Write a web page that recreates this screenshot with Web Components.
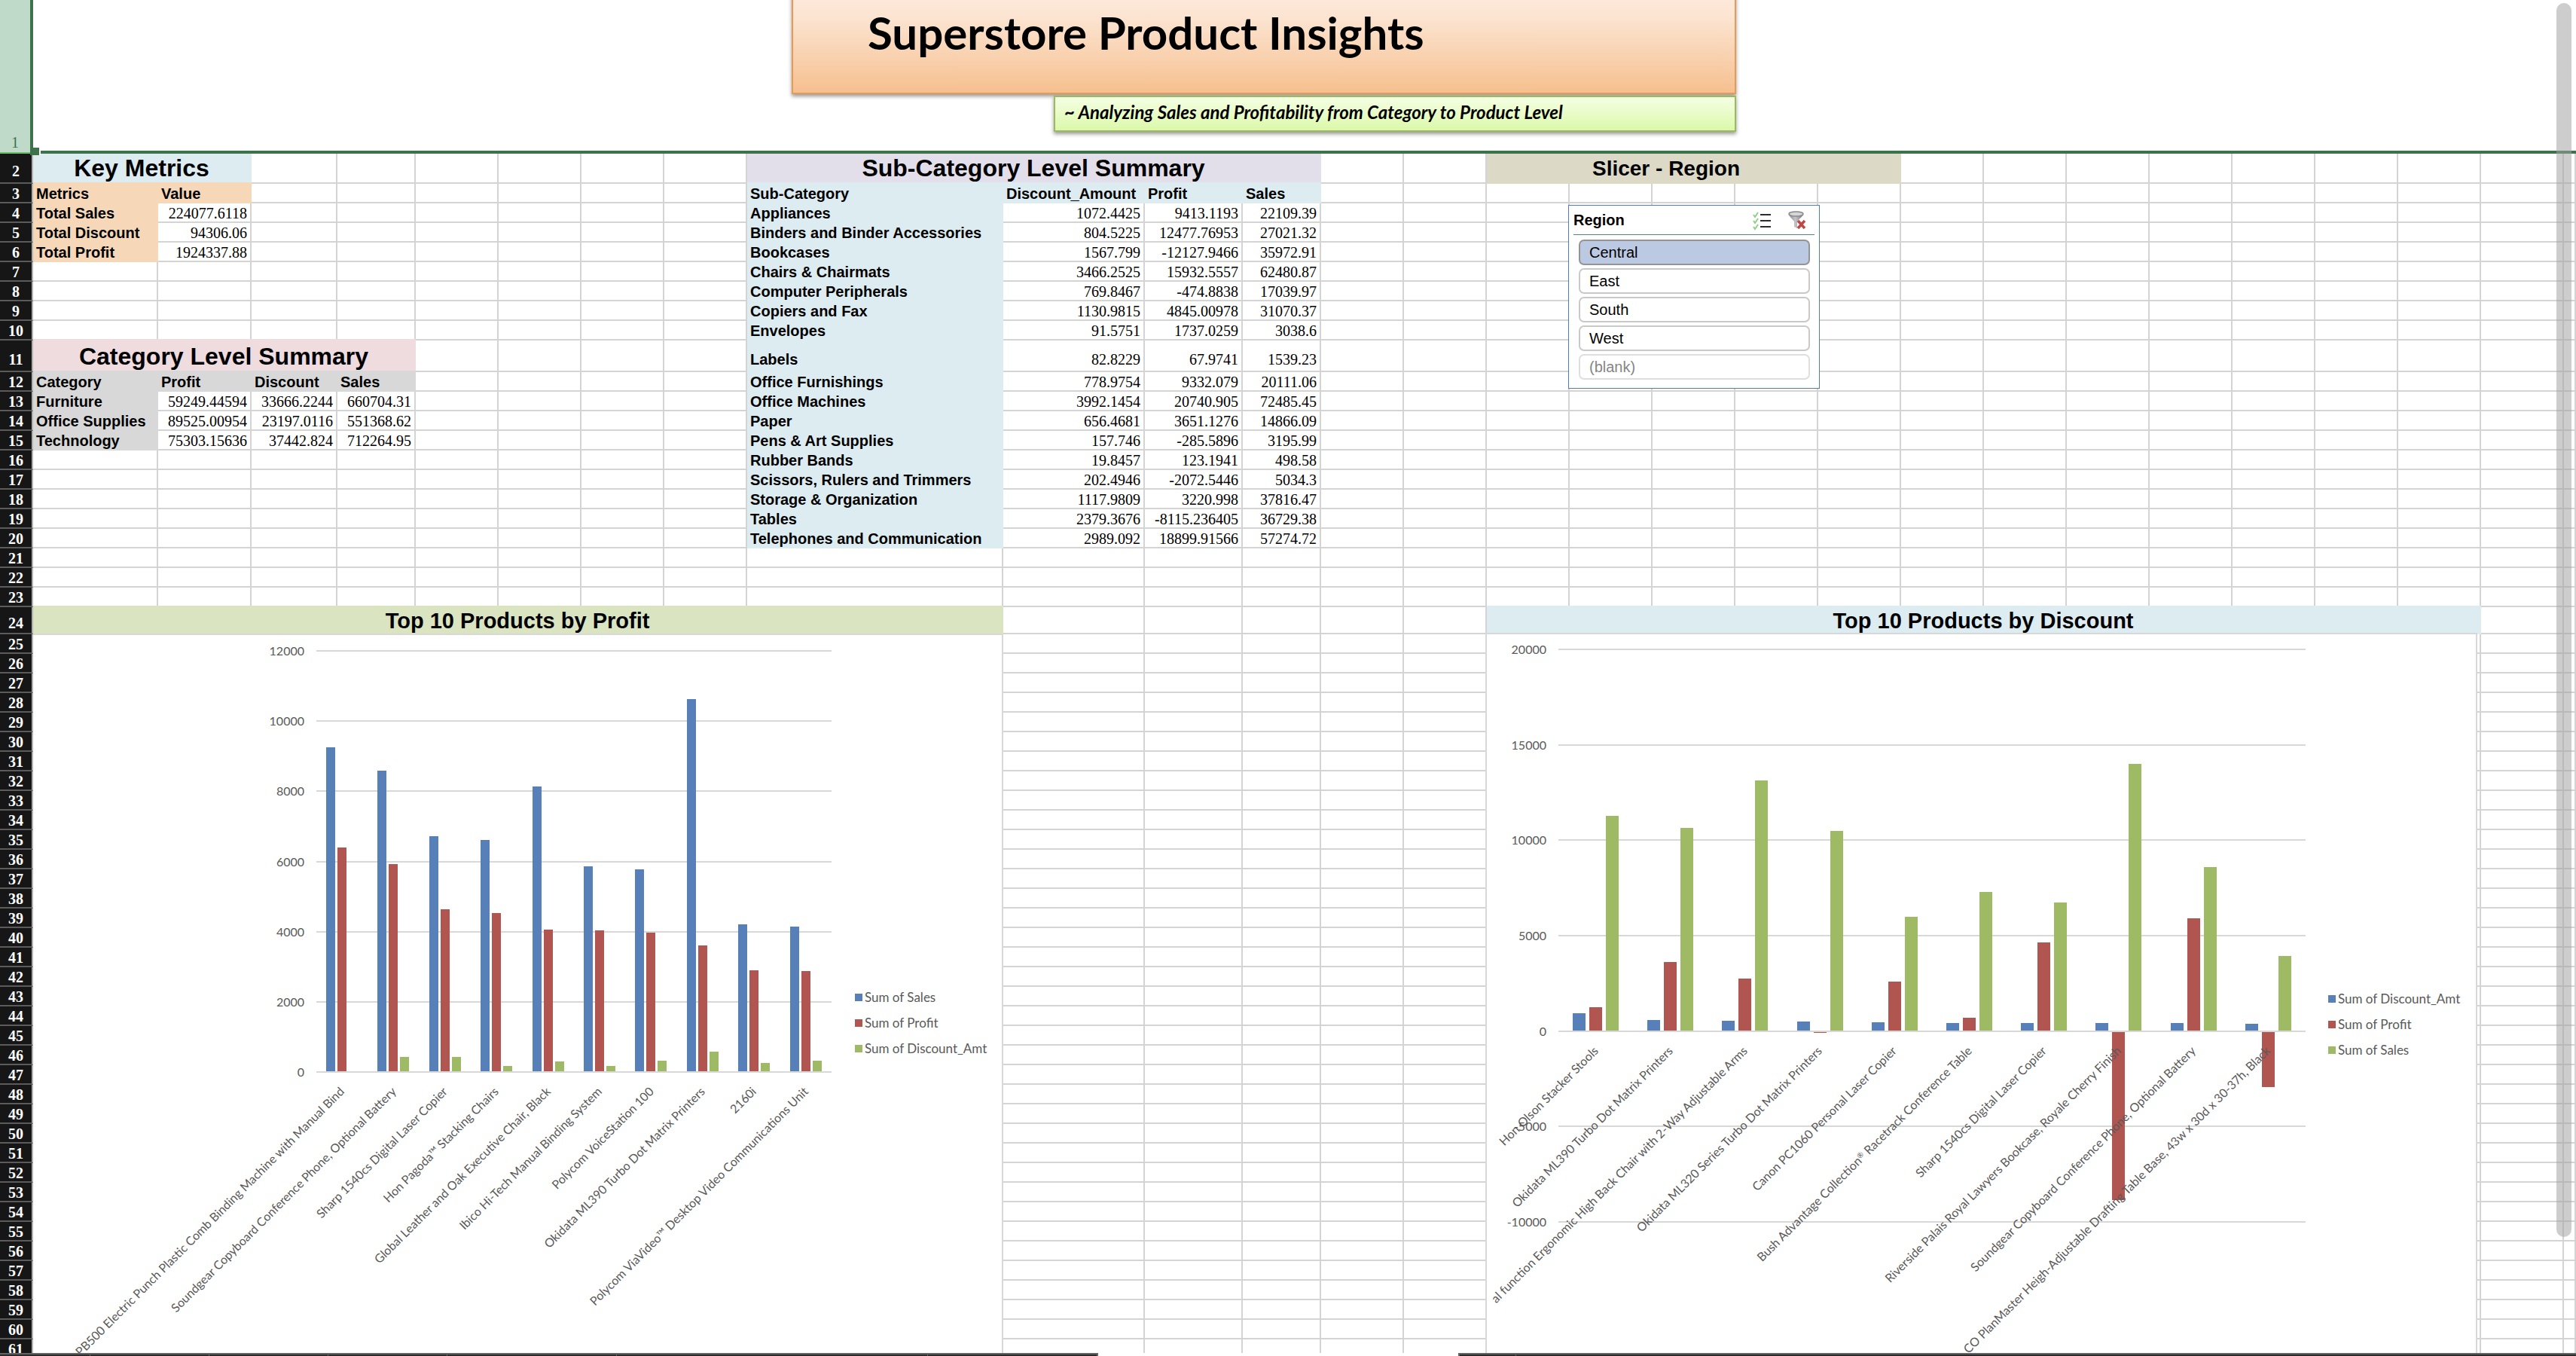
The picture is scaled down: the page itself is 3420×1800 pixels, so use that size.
<!DOCTYPE html>
<html lang="en">
<head>
<meta charset="utf-8">
<title>Superstore Product Insights</title>
<style>
  html, body { margin: 0; height: 100%; overflow: hidden; background: #fff; }
  body { display: flex; flex-direction: column; font-family: "Liberation Sans", sans-serif; font-size: 20px; color: #000; }
  work-sheet { flex: 1; min-height: 0; }
  .title { left: 1051px; top: -40px; width: 1254px; height: 165px; }
  .subtitle { left: 1399px; top: 127px; width: 906px; height: 48px; }
  .region { left: 2082px; top: 272px; width: 334px; height: 244px; }
  .profit { left: 44px; top: 841px; width: 1288px; bottom: 0; }
  .discount { left: 1972px; top: 840px; width: 1317px; bottom: 0; }
</style>
</head>
<body>
<work-sheet>
  <text-banner class="title" kind="heading"><h1>Superstore Product Insights</h1></text-banner>
  <text-banner class="subtitle" kind="note"><p>~ Analyzing Sales and Profitability from Category to Product Level</p></text-banner>
  <region-slicer class="region" heading="Region" selected="Central"></region-slicer>
  <bar-chart class="profit" source="profit"></bar-chart>
  <bar-chart class="discount" source="discount"></bar-chart>
</work-sheet>
<tab-strip></tab-strip>

<script>
const COLUMN_WIDTHS = [166, 124, 114, 104, 110, 110, 110, 110, 340, 188, 130, 104, 110, 110,
  110, 110, 110, 110, 110, 110, 110, 110, 110, 110, 110, 110, 110];
const COLUMN_COUNT = COLUMN_WIDTHS.length + 1;
const LAST_ROW = 61;

/* row -> column -> [text, classes, colspan] */
const CELLS = {};
const put = (row, col, text, cls = '', span = 1) => { (CELLS[row] = CELLS[row] || {})[col] = [text, cls, span]; };

put(2, 0, 'Key Metrics', 'head big blue', 2);
put(3, 0, 'Metrics', 'label orange'); put(3, 1, 'Value', 'label orange');
[['Total Sales', '224077.6118'], ['Total Discount', '94306.06'], ['Total Profit', '1924337.88']].forEach(([a, b], i) => {
  put(4 + i, 0, a, 'label orange'); put(4 + i, 1, b, 'num');
});

put(11, 0, 'Category Level Summary', 'head big pink', 4);
['Category', 'Profit', 'Discount', 'Sales'].forEach((t, i) => put(12, i, t, 'label grey'));
[['Furniture', '59249.44594', '33666.2244', '660704.31'],
 ['Office Supplies', '89525.00954', '23197.0116', '551368.62'],
 ['Technology', '75303.15636', '37442.824', '712264.95']].forEach((r, i) =>
  r.forEach((t, c) => put(13 + i, c, t, c ? 'num' : 'label grey')));

put(2, 8, 'Sub-Category Level Summary', 'head big purple', 4);
['Sub-Category', 'Discount_Amount', 'Profit', 'Sales'].forEach((t, i) => put(3, 8 + i, t, 'label blue'));
[['Appliances', '1072.4425', '9413.1193', '22109.39'],
 ['Binders and Binder Accessories', '804.5225', '12477.76953', '27021.32'],
 ['Bookcases', '1567.799', '-12127.9466', '35972.91'],
 ['Chairs & Chairmats', '3466.2525', '15932.5557', '62480.87'],
 ['Computer Peripherals', '769.8467', '-474.8838', '17039.97'],
 ['Copiers and Fax', '1130.9815', '4845.00978', '31070.37'],
 ['Envelopes', '91.5751', '1737.0259', '3038.6'],
 ['Labels', '82.8229', '67.9741', '1539.23'],
 ['Office Furnishings', '778.9754', '9332.079', '20111.06'],
 ['Office Machines', '3992.1454', '20740.905', '72485.45'],
 ['Paper', '656.4681', '3651.1276', '14866.09'],
 ['Pens & Art Supplies', '157.746', '-285.5896', '3195.99'],
 ['Rubber Bands', '19.8457', '123.1941', '498.58'],
 ['Scissors, Rulers and Trimmers', '202.4946', '-2072.5446', '5034.3'],
 ['Storage & Organization', '1117.9809', '3220.998', '37816.47'],
 ['Tables', '2379.3676', '-8115.236405', '36729.38'],
 ['Telephones and Communication', '2989.092', '18899.91566', '57274.72']].forEach((r, i) =>
  r.forEach((t, c) => put(4 + i, 8 + c, t, c ? 'num' : 'label blue')));

put(2, 14, 'Slicer - Region', 'head mid khaki early', 5);
put(24, 0, 'Top 10 Products by Profit', 'head mid green', 9);
put(24, 14, 'Top 10 Products by Discount', 'head mid blue', 12);

const BLUE = '#5880b8', RED = '#b15550', GREEN = '#9fba64';
const CHARTS = {
  profit: {
    label: 'Top 10 Products by Profit',
    plot: { left: 376, top: 21, width: 684, height: 559 },
    min: 0, max: 12000, step: 2000,
    bars: { first: 13, pitch: 15, width: 12 },
    legend: { left: 1091, top: 481 },
    series: [
      ['Sum of Sales', BLUE, [9248, 8577, 6719, 6608, 8130, 5853, 5769, 10617, 4205, 4135]],
      ['Sum of Profit', RED, [6398, 5923, 4638, 4540, 4051, 4037, 3981, 3604, 2892, 2878]],
      ['Sum of Discount_Amt', GREEN, [0, 419, 419, 182, 293, 182, 321, 573, 251, 321]]],
    categories: ['PB500 Electric Punch Plastic Comb Binding Machine with Manual Bind',
      'Soundgear Copyboard Conference Phone, Optional Battery', 'Sharp 1540cs Digital Laser Copier',
      'Hon Pagoda™ Stacking Chairs', 'Global Leather and Oak Executive Chair, Black',
      'Ibico Hi-Tech Manual Binding System', 'Polycom VoiceStation 100',
      'Okidata ML390 Turbo Dot Matrix Printers', '2160i', 'Polycom ViaVideo™ Desktop Video Communications Unit']
  },
  discount: {
    label: 'Top 10 Products by Discount',
    plot: { left: 95, top: 20, width: 992, height: 760 },
    min: -10000, max: 20000, step: 5000,
    bars: { first: 19, pitch: 22, width: 17 },
    legend: { left: 1117, top: 484 },
    series: [
      ['Sum of Discount_Amt', BLUE, [924, 590, 539, 513, 462, 411, 411, 411, 411, 385]],
      ['Sum of Profit', RED, [1258, 3619, 2746, -90, 2592, 693, 4646, -8850, 5904, -2920]],
      ['Sum of Sales', GREEN, [11268, 10652, 13116, 10472, 5980, 7290, 6725, 13989, 8599, 3927]]],
    categories: ['Hon Olson Stacker Stools', 'Okidata ML390 Turbo Dot Matrix Printers',
      'al function Ergonomic High Back Chair with 2-Way Adjustable Arms',
      'Okidata ML320 Series Turbo Dot Matrix Printers', 'Canon PC1060 Personal Laser Copier',
      'Bush Advantage Collection® Racetrack Conference Table', 'Sharp 1540cs Digital Laser Copier',
      'Riverside Palais Royal Lawyers Bookcase, Royale Cherry Finish',
      'Soundgear Copyboard Conference Phone, Optional Battery',
      'CO PlanMaster Heigh-Adjustable Drafting Table Base, 43w x 30d x 30-37h, Black']
  }
};

const escapeText = s => s.replace(/&/g, '&amp;').replace(/</g, '&lt;');

customElements.define('work-sheet', class extends HTMLElement {
  constructor() {
    super();
    const cols = '<col style="width:44px">' + COLUMN_WIDTHS.map(w => `<col style="width:${w}px">`).join('') + '<col>';
    let rows = '';
    for (let r = 1; r <= LAST_ROW; r++) {
      let cells = '';
      if (r === 1) cells = `<td colspan="${COLUMN_COUNT}"></td>`;
      else for (let c = 0; c < COLUMN_COUNT;) {
        const cell = CELLS[r] && CELLS[r][c];
        if (cell) {
          cells += `<td class="${cell[1]}" colspan="${cell[2]}">${escapeText(cell[0])}</td>`;
          c += cell[2];
        } else { cells += '<td></td>'; c++; }
      }
      rows += `<tr class="r${r}"><th scope="row">${r}</th>${cells}</tr>`;
    }
    this.attachShadow({ mode: 'open' }).innerHTML = `
      <style>
        :host { display: block; position: relative; overflow: hidden; }
        table { width: 100%; table-layout: fixed; border-collapse: separate; border-spacing: 0; }
        tr { height: 26px; }
        td, th { box-sizing: border-box; height: 26px; padding: 0 4px; border: 0 solid #d4d4d4; border-width: 0 2px 2px 0;
          line-height: 22px; white-space: nowrap; vertical-align: bottom; }
        th { padding: 0; background: #161616; color: #fff; text-align: center; font: 700 20px/22px "Liberation Serif", serif;
          border-color: #b0b0b0; border-bottom-color: #5a5a5a; }
        .r1 td, .r1 th { height: 204px; }
        .r1 td { border-bottom: 4px solid #3d734b; border-right: 0; }
        .r1 th { background: #bfdac9; color: #3d734b; font-weight: 400; border-right: 4px solid #3d734b; border-bottom: 2px solid #6fbf6a; padding-bottom: 2px; }
        .r2 td, .r2 th { height: 40px; padding-bottom: 4px; }
        .r11 td, .r11 th { height: 42px; padding-bottom: 4px; }
        .r24 td, .r24 th { height: 36px; padding-bottom: 2px; }
        .num { text-align: right; font-family: "Liberation Serif", serif; }
        .label, .head { font-weight: 700; background: var(--fill); border-color: var(--fill); box-shadow: 0 -2px 0 var(--fill); }
        .r2 .head { box-shadow: none; }
        .head { text-align: center; }
        tr .big { font-size: 32px; line-height: 36px; padding-bottom: 1px; }
        tr .mid { font-size: 28px; line-height: 32px; padding-bottom: 0; }
        .r24 .mid { font-size: 29px; }
        .r2 .mid { padding-bottom: 2px; }
        tr .early { padding-right: 76px; }
        .blue { --fill: #ddecf1; } .orange { --fill: #f6d7b8; } .pink { --fill: #efdcde; } .grey { --fill: #d8d8d8; }
        .purple { --fill: #e2dfea; } .khaki { --fill: #dcd9c6; } .green { --fill: #dae4c1; }
        .handle { position: absolute; left: 40px; top: 196px; width: 12px; height: 10px; background: #3d734b; border-right: 2px solid #fff; }
        .scroll { position: absolute; right: 6px; top: 4px; width: 20px; height: 1638px; border-radius: 10px; background: rgba(160, 160, 160, .53); }
        ::slotted(*) { position: absolute; box-sizing: border-box; }
      </style>
      <table><colgroup>${cols}</colgroup><tbody>${rows}</tbody></table>
      <div class="handle"></div>
      <slot></slot>
      <div class="scroll"></div>`;
  }
});

customElements.define('text-banner', class extends HTMLElement {
  constructor() {
    super();
    this.attachShadow({ mode: 'open' }).innerHTML = `
      <style>
        :host { display: flex; border: 2px solid; font-family: Lato, sans-serif; font-weight: 700; white-space: nowrap; box-shadow: 0 3px 5px rgba(0, 0, 0, .4); }
        :host([kind="heading"]) { align-items: flex-end; padding: 0 0 48px 99px; border-color: #e79a56; background: linear-gradient(#fde9dc 20%, #fbe3cf 40%, #f6c08f); }
        :host([kind="note"]) { align-items: center; padding: 0 12px 4px; border-color: #9bba60; background: linear-gradient(#f5ffe4, #dcf8aa); }
        ::slotted(*) { margin: 0; font-weight: 700; }
        ::slotted(h1) { font-size: 60px; line-height: 64px; }
        ::slotted(p) { font-size: 24px; line-height: 28px; font-style: italic; }
      </style><slot></slot>`;
  }
});

customElements.define('region-slicer', class extends HTMLElement {
  connectedCallback() {
    const items = ['Central', 'East', 'South', 'West', '(blank)'];
    const selected = this.getAttribute('selected');
    this.attachShadow({ mode: 'open' }).innerHTML = `
      <style>
        :host { display: flex; flex-direction: column; background: #fff; border: 1px solid #4f7dba; padding: 0 6px; }
        header { display: flex; align-items: center; height: 38px; border-bottom: 1px solid #4f7dba; padding-right: 7px; font-size: 20px; }
        h2 { flex: 1; margin: 0; font-size: 20px; line-height: 22px; }
        button { font: inherit; }
        .tool { width: 30px; height: 30px; margin-left: 17px; padding: 0; border: 0; background: none; }
        .tool svg { display: block; }
        .items { display: flex; flex-direction: column; gap: 4px; padding: 6px 6px 0 7px; }
        .items button { height: 34px; padding: 0 12px; text-align: left; line-height: 22px; color: #000; background: #fff; border: 2px solid #c9c9c9; border-radius: 7px; }
        .items button[aria-pressed="true"] { background: #bbc9e2; border-color: #949494; }
        .items button:disabled { color: #868686; border-color: #dedede; }
      </style>
      <header><h2>${this.getAttribute('heading')}</h2>
        <button class="tool" aria-label="Multi-select"><svg width="30" height="30" fill="none">
          <path d="M3 8l2 3 4-6M3 16l2 3 4-6M3 24l2 3 4-6" stroke="#93cf86" stroke-width="2"/>
          <path d="M12 8h14M12 16h14M12 24h14" stroke="#2c2c2c" stroke-width="2"/></svg></button>
        <button class="tool" aria-label="Clear filter"><svg width="30" height="30">
          <defs><linearGradient id="metal"><stop offset="0" stop-color="#8b8b8f"/><stop offset=".45" stop-color="#c4c4c8"/><stop offset="1" stop-color="#77777b"/></linearGradient></defs>
          <path d="M3 7c0 3 4 6 7 10v7l4 2V17c3-4 8-7 8-10z" fill="url(#metal)"/>
          <ellipse cx="12.500" cy="7" rx="9.500" ry="3" fill="#d6d6d8" stroke="#88888c" stroke-width="1.500"/>
          <path d="M15 16l9 10M24 16l-9 10" stroke="#bd4a44" stroke-width="3.500"/></svg></button>
      </header>
      <div class="items">${items.map(t =>
        `<button aria-pressed="${t === selected}"${t === '(blank)' ? ' disabled' : ''}>${t}</button>`).join('')}</div>`;
  }
});

customElements.define('bar-chart', class extends HTMLElement {
  connectedCallback() {
    const c = CHARTS[this.getAttribute('source')];
    const { left, top, width, height } = c.plot;
    const y = v => Math.round(top + (c.max - v) / (c.max - c.min) * height);
    const zero = y(0), pitch = width / c.categories.length;
    let grid = '', axis = '', bars = '', names = '', legend = '';
    for (let v = c.min; v <= c.max; v += c.step) {
      grid += `<rect x="${left}" y="${y(v) - 1}" width="${width}" height="2" fill="#d8d8d8"/>`;
      axis += `<text x="${left - 16}" y="${y(v) + 6}" text-anchor="end">${v}</text>`;
    }
    c.series.forEach(([name, color, values], s) => {
      values.forEach((v, i) => {
        const x = Math.round(left + pitch * i + c.bars.first + c.bars.pitch * s);
        const from = v >= 0 ? y(v) : zero + 1, to = v >= 0 ? zero - 1 : y(v);
        if (to > from) bars += `<rect x="${x}" y="${from}" width="${c.bars.width}" height="${to - from}" fill="${color}"/>`;
      });
      const ly = c.legend.top + 34 * s;
      legend += `<rect x="${c.legend.left}" y="${ly - 5}" width="10" height="10" fill="${color}"/><text class="key" x="${c.legend.left + 13}" y="${ly + 6}">${name}</text>`;
    });
    c.categories.forEach((name, i) => {
      const x = Math.round(left + pitch * (i + .5) + 4), ty = zero + 27;
      const marked = name.replace('®', '<tspan font-size="10" dy="-5">®</tspan><tspan dy="5">&#8203;</tspan>');
      names += `<text transform="translate(${x} ${ty}) rotate(-45)" text-anchor="end">${marked}</text>`;
    });
    this.attachShadow({ mode: 'open' }).innerHTML = `
      <style>
        :host { display: block; overflow: hidden; background: #fff; border: 2px solid #d8d8d8; border-bottom: 0; }
        :host([source="profit"]) { border-left: 0; }
        svg { display: block; width: 100%; height: 100%; font: 16px Lato, sans-serif; fill: #595959; }
        .key { font-size: 17px; }
      </style>
      <svg role="img" aria-label="${c.label}">${grid}${bars}${axis}${names}${legend}</svg>`;
  }
});

customElements.define('tab-strip', class extends HTMLElement {
  constructor() {
    super();
    const tabs = [120, 158, 158, 158, 225, 413].map(w => `<i style="width:${w}px"></i>`).join('');
    this.attachShadow({ mode: 'open' }).innerHTML = `
      <style>
        :host { display: flex; height: 4px; }
        div { display: flex; box-sizing: border-box; border-top: 2px solid #636363; background: #2b2a2c; }
        .left { width: 1458px; border-right: 2px solid #636363; }
        .right { flex: 1; margin-left: 478px; border-left: 2px solid #636363; }
        i { box-sizing: border-box; border-right: 1px solid #636363; }
      </style>
      <div class="left">${tabs}</div><div class="right"><i style="width:75px"></i></div>`;
  }
});
</script>
</body>
</html>
